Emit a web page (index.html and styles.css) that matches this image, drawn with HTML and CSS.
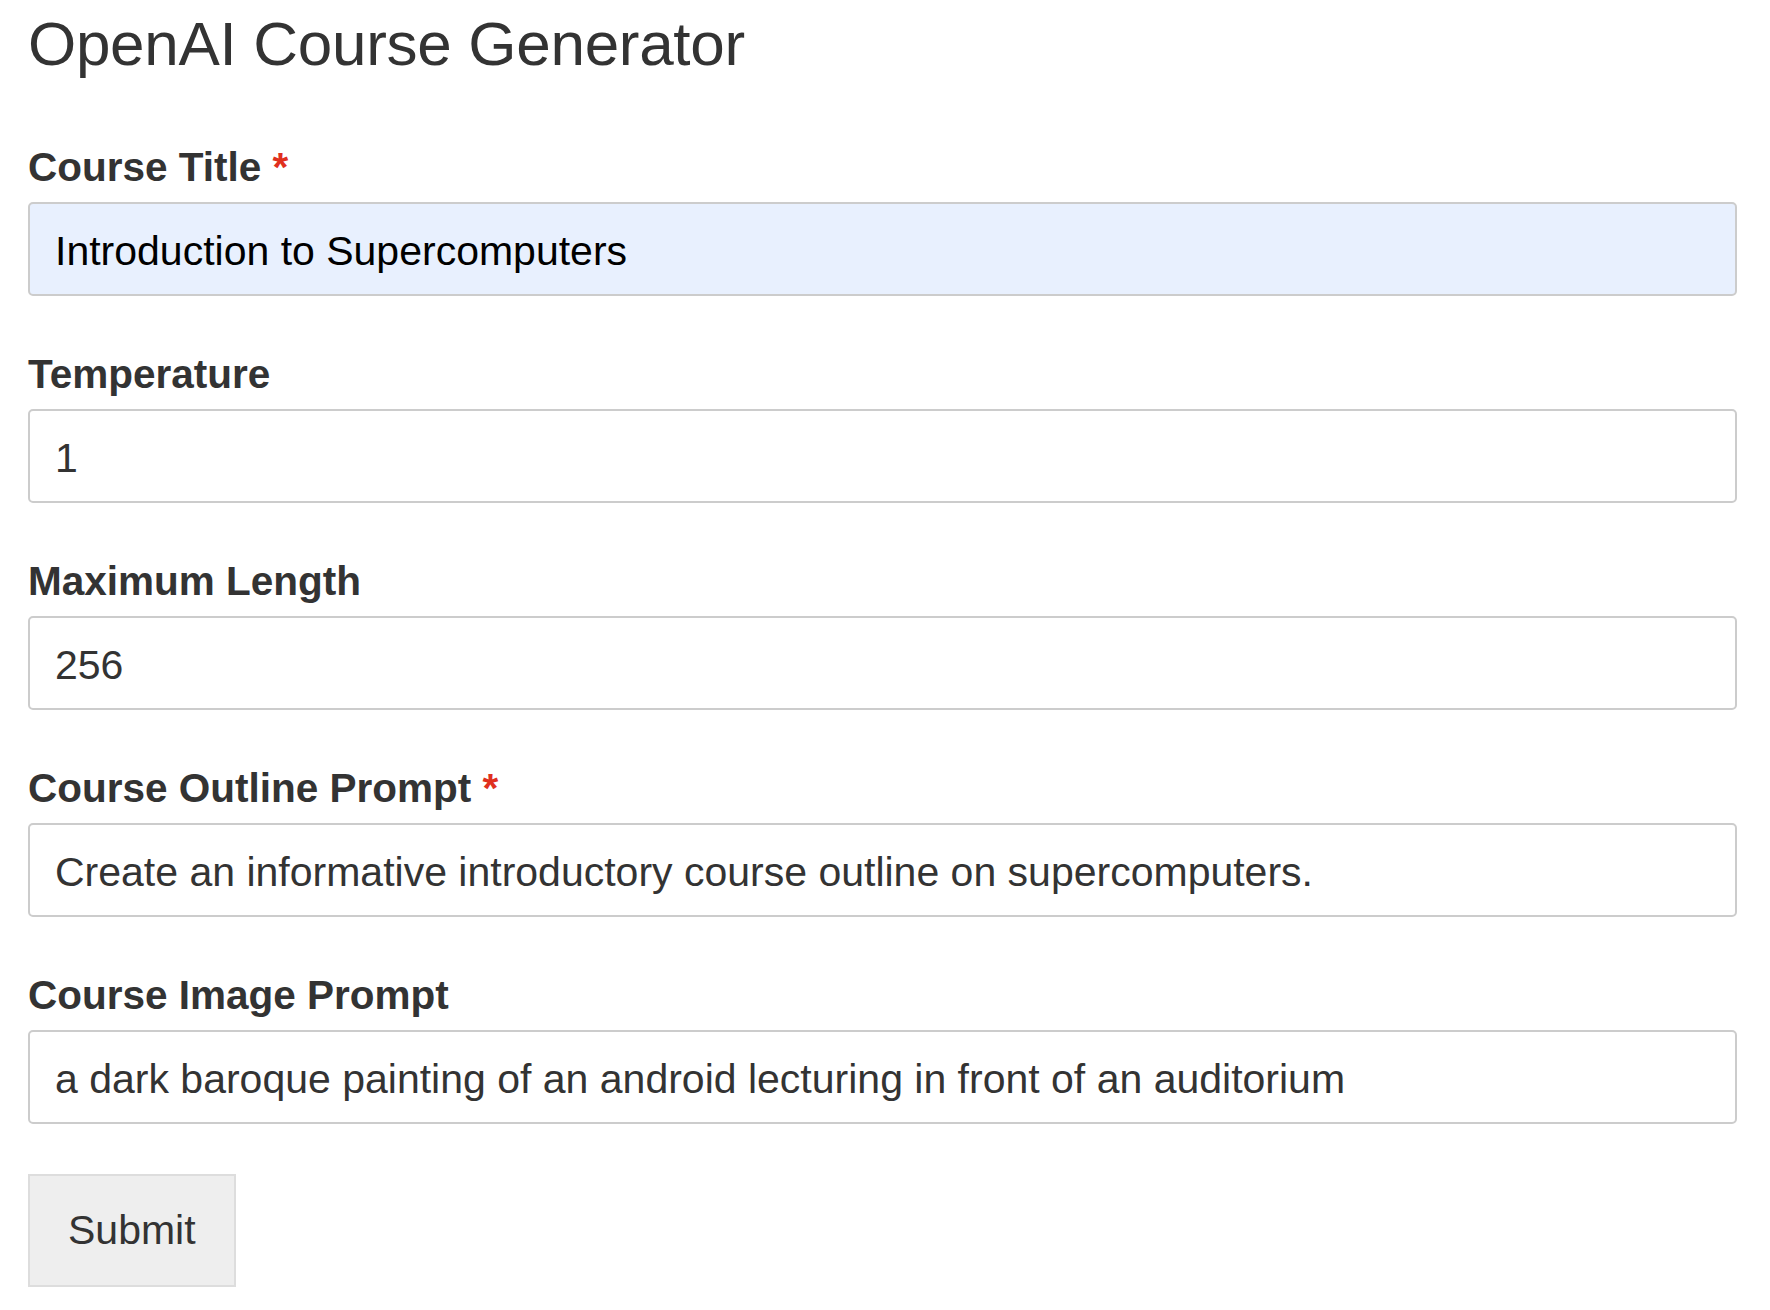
FILE: index.html
```html
<!DOCTYPE html>
<html lang="en">
<head>
<meta charset="utf-8">
<title>OpenAI Course Generator</title>
<link rel="stylesheet" href="styles.css">
</head>
<body>
<main class="page">
  <h1 class="title">OpenAI Course Generator</h1>
  <form class="form">
    <div class="field">
      <label class="label" for="title">Course Title <span class="req">*</span></label>
      <input class="input input-autofill" id="title" type="text" value="Introduction to Supercomputers">
    </div>
    <div class="field">
      <label class="label" for="temp">Temperature</label>
      <input class="input" id="temp" type="text" value="1">
    </div>
    <div class="field">
      <label class="label" for="maxlen">Maximum Length</label>
      <input class="input" id="maxlen" type="text" value="256">
    </div>
    <div class="field">
      <label class="label" for="outline">Course Outline Prompt <span class="req">*</span></label>
      <input class="input" id="outline" type="text" value="Create an informative introductory course outline on supercomputers.">
    </div>
    <div class="field">
      <label class="label" for="image">Course Image Prompt</label>
      <input class="input" id="image" type="text" value="a dark baroque painting of an android lecturing in front of an auditorium">
    </div>
    <button class="submit" type="button">Submit</button>
  </form>
</main>
</body>
</html>
```

FILE: styles.css
```css
html, body {
  margin: 0;
  padding: 0;
  background: #ffffff;
}

body {
  font-family: "Liberation Sans", Arial, Helvetica, sans-serif;
  color: #333333;
}

.page {
  margin: 0 33px 0 28px;
}

.title {
  margin: 8px 0 0 0;
  font-size: 62px;
  font-weight: 400;
  letter-spacing: -0.3px;
  line-height: 71px;
  color: #333333;
}

.form {
  display: flex;
  flex-direction: column;
  gap: 55px;
  margin-top: 65px;
}

.field {
  display: flex;
  flex-direction: column;
  gap: 12px;
}

.label {
  display: block;
  font-size: 40.5px;
  font-weight: 700;
  line-height: 46px;
  color: #333333;
}

.req {
  color: #e0301e;
}

.input {
  box-sizing: border-box;
  width: 100%;
  height: 94px;
  margin: 0;
  padding: 4px 25px 0 25px;
  border: 2px solid #cccccc;
  border-radius: 5px;
  background: #ffffff;
  font-family: "Liberation Sans", Arial, Helvetica, sans-serif;
  font-size: 41px;
  color: #333333;
  outline: none;
}

.input-autofill {
  background: #e8f0fe;
  color: #000000;
}

.submit {
  align-self: flex-start;
  margin-top: -5px;
  box-sizing: border-box;
  height: 113px;
  padding: 0 38px;
  border: 2px solid #dddddd;
  border-radius: 0;
  background: #eeeeee;
  font-family: "Liberation Sans", Arial, Helvetica, sans-serif;
  font-size: 41px;
  color: #333333;
}
```
